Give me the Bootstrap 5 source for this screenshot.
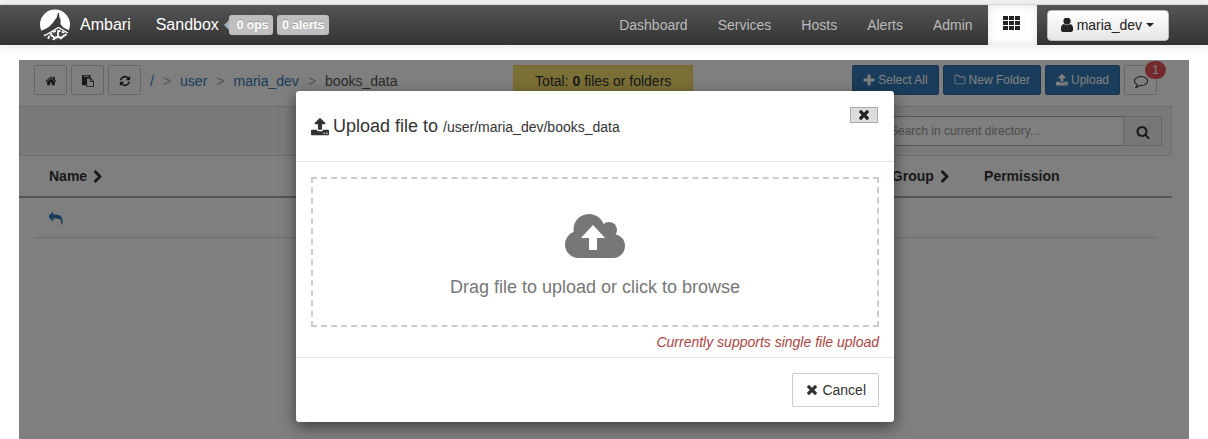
<!DOCTYPE html>
<html lang="en">
<head>
<meta charset="utf-8">
<meta name="viewport" content="width=device-width, initial-scale=1">
<title>Ambari - Files View</title>
<link href="https://cdn.jsdelivr.net/npm/bootstrap@5.3.0/dist/css/bootstrap.min.css" rel="stylesheet">
<style>
  body { font-family: "Liberation Sans", Arial, sans-serif; font-size: 14px; line-height: 20px; color: #333; background: #fff; }
  .ico { width: 1em; height: 1em; fill: currentColor; flex: none; }
  .page-top { background: #f4f4f4; display: flow-root; }
  .topbar { border-top: 1px solid #d8d8d8; margin-top: 4px; height: 41px; padding: 0 39px; background: linear-gradient(#555, #333); box-shadow: 0 1px 10px rgba(0,0,0,.1); }
  .topbar .brand { color: #fff; font-size: 16px; gap: 9px; }
  .topbar .cluster { margin-left: 25px; }
  .topbar .nav-link { color: #bbb; font-size: 14px; padding: 0 15px; line-height: 40px; }
  .topbar .grid-link { background: #fff; color: #222; width: 49px; padding: 0; box-shadow: inset 0 0 8px rgba(0,0,0,.12); font-size: 20px; }
  .tagbox { background: #bfbfbf; color: #fff; font-size: 12px; font-weight: bold; line-height: 20px; border-radius: 3px; padding: 0 5px; text-shadow: 0 -1px 0 rgba(0,0,0,.25); }
  .ops { position: relative; padding-left: 8px; margin-left: 10px; }
  .ops::before { content: ""; position: absolute; left: -5px; top: 5px; border: 5px solid transparent; border-left: 0; border-right-color: #9fb2bd; }
  .user-btn { background: linear-gradient(#fff, #e6e6e6); border: 1px solid #bbb; color: #222; height: 31px; font-size: 14px; padding: 0 14px 0 12px; border-radius: 4px; gap: 3px; margin: 0 0 0 10px; }
  .user-btn::after { margin-left: 1px; }
  .workspace { margin: 15px 19px 0; min-height: calc(100vh - 60px); padding-right: 17px; position: relative; }
  .tools { display: grid; grid-template-columns: 31fr 180px 30fr; padding: 5px 15px 9px; }
  .tool-btn { height: 30px; font-size: 12px; line-height: 18px; border-radius: 2px; gap: 3px; }
  .tool-plain { background: #fff; border: 1px solid #ccc; color: #333; padding: 0; width: 33px; }
  .tool-plain .wide { font-size: 14px; }
  .tool-main { background: #337ab7; border: 1px solid #2e6da4; color: #fff; padding: 0 10px; }
  .crumbs { --bs-breadcrumb-divider: ">"; --bs-breadcrumb-divider-color: #aaa; --bs-breadcrumb-item-padding-x: 9px; font-size: 14px; line-height: 32px; margin: 0 0 0 9px; }
  .crumbs a { color: #337ab7; text-decoration: none; }
  .crumbs .active { color: #555; }
  .total { background: #f4de6c; border: 1px solid #f0d458; height: 31px; line-height: 30px; font-size: 14px; }
  .count { position: absolute; right: -10px; top: -5px; background: #e8545a; color: #fff; font-size: 12px; line-height: 18px; width: 21px; border-radius: 9px; }
  .searchbar { background: #f5f5f5; border: 1px solid #ddd; height: 50px; padding: 9px; }
  .searchbar .input-group { width: 284px; }
  .searchbar .form-control, .searchbar .btn { height: 30px; font-size: 12px; border-radius: 2px; border-color: #aaa; padding: 0 11px; }
  .searchbar .btn { background: #eee; color: #333; width: 39px; font-size: 14px; border-color: #ccc; }
  .searchbar .form-control::placeholder { color: #999; }
  .files { font-size: 14px; table-layout: fixed; }
  .files th { border-bottom: 2px solid #aaa; padding: 9px 0 10px; height: 41px; }
  .files .col-name { width: 75.7%; }
  .files .col-group { width: 8%; }
  .files td { border: 0; padding: 10px 0; height: 41px; }
  .files td a { color: #337ab7; }
  .files tr > :first-child { padding-left: 30px; }
  .files tbody tr { background: linear-gradient(#ddd, #ddd) 50% 100% / calc(100% - 30px) 1px no-repeat; }
  .veil { position: absolute; inset: 0; background: rgba(0,0,0,.5); padding: 31px 18px 17px 0; z-index: 5; }
  .upload-box { width: 598px; border: 0; border-radius: 3px; background: #fff; color: #333; box-shadow: 0 5px 15px rgba(0,0,0,.5); }
  .upload-box .modal-header { padding: 15px; height: 71px; border-bottom: 1px solid #e5e5e5; }
  .upload-box h4 { font-size: 18px; line-height: 40px; gap: 4px; }
  .upload-box h4 small { font-size: 14px; }
  .close-x { border: 1px solid #aaa; background: #ddd; color: #222; width: 28px; height: 16px; font-size: 14px; margin: 1px 1px 0 0; }
  .upload-box .modal-body { padding: 15px 15px 5px; }
  .drop { border: 2px dashed #ccc; height: 150px; font-size: 18px; color: #777; background: #fff; gap: 19px; width: 100%; padding-top: 7px; }
  .hint { color: #a94442; line-height: 20px; margin-top: 5px; }
  .upload-box .modal-footer { padding: 15px; border-top: 1px solid #e5e5e5; }
  .upload-box .modal-footer > * { margin: 0; }
  .cancel { border: 1px solid #ccc; background: #fff; color: #333; font-size: 14px; line-height: 20px; padding: 6px 12px; border-radius: 2px; gap: 3px; }
</style>
</head>
<body>
<svg class="d-none" aria-hidden="true">
  <symbol id="home" viewBox="0 0 1792 1792"><path d="M1472 992v480q0 26-19 45t-45 19h-384v-384h-256v384h-384q-26 0-45-19t-19-45v-480q0-1 .5-3t.5-3l575-474 575 474q1 2 1 6zm223-69l-62 74q-8 9-21 11h-3q-13 0-21-7l-692-577-692 577q-12 8-24 7-13-2-21-11l-62-74q-8-10-7-23.5t11-21.5l719-599q32-26 76-26t76 26l244 204v-195q0-14 9-23t23-9h192q14 0 23 9t9 23v408l219 182q10 8 11 21.5t-7 23.5z"/></symbol>
  <symbol id="paste" viewBox="0 0 1792 1792"><path d="M768 1664h896v-640h-416q-40 0-68-28t-28-68v-416h-384v1152zm256-1440v-64q0-13-9.5-22.5t-22.5-9.5h-704q-13 0-22.5 9.5t-9.5 22.5v64q0 13 9.5 22.5t22.5 9.5h704q13 0 22.5-9.5t9.5-22.5zm256 672h299l-299-299v299zm512 128v672q0 40-28 68t-68 28h-960q-40 0-68-28t-28-68v-160h-544q-40 0-68-28t-28-68v-1344q0-40 28-68t68-28h1088q40 0 68 28t28 68v328q21 13 36 28l408 408q28 28 48 76t20 88z"/></symbol>
  <symbol id="refresh" viewBox="0 0 1792 1792"><path d="M1639 1056q0 5-1 7-64 268-268 434.5t-478 166.5q-146 0-282.5-55t-243.5-157l-129 129q-19 19-45 19t-45-19-19-45v-448q0-26 19-45t45-19h448q26 0 45 19t19 45-19 45l-137 137q71 66 161 102t187 36q134 0 250-65t186-179q11-17 53-117 8-23 30-23h192q13 0 22.5 9.5t9.5 22.5zm25-800v448q0 26-19 45t-45 19h-448q-26 0-45-19t-19-45 19-45l138-138q-148-137-349-137-134 0-250 65t-186 179q-11 17-53 117-8 23-30 23h-199q-13 0-22.5-9.5t-9.5-22.5v-7q65-268 270-434.5t480-166.5q146 0 284 55.5t245 156.5l130-129q19-19 45-19t45 19 19 45z"/></symbol>
  <symbol id="chev" viewBox="256 0 1280 1792"><path d="M1363 877l-742 742q-19 19-45 19t-45-19l-166-166q-19-19-19-45t19-45l531-531-531-531q-19-19-19-45t19-45l166-166q19-19 45-19t45 19l742 742q19 19 19 45t-19 45z"/></symbol>
  <symbol id="reply" viewBox="0 0 1792 1792"><path d="M1792 1120q0 166-127 451-3 7-10.5 24t-13.5 30-13 22q-12 17-28 17-15 0-23.5-10t-8.5-25q0-9 2.5-26.5t2.5-23.5q5-68 5-123 0-112-19.5-200.5t-54-153.5-89.5-112-117.5-79-151.5-47-177.5-22-208.500-7h-224v256q0 26-19 45t-45 19-45-19l-512-512q-19-19-19-45t19-45l512-512q19-19 45-19t45 19 19 45v256h224q713 0 875 403 53 134 53 333z"/></symbol>
  <symbol id="plus" viewBox="128 64 1536 1536"><path d="M1600 736v192q0 40-28 68t-68 28h-416v416q0 40-28 68t-68 28h-192q-40 0-68-28t-28-68v-416h-416q-40 0-68-28t-28-68v-192q0-40 28-68t68-28h416v-416q0-40 28-68t68-28h192q40 0 68 28t28 68v416h416q40 0 68 28t28 68z"/></symbol>
  <symbol id="folder" viewBox="0 0 1792 1792"><path d="M1600 1312v-704q0-40-28-68t-68-28h-704q-40 0-68-28t-28-68v-64q0-40-28-68t-68-28h-320q-40 0-68 28t-28 68v960q0 40 28 68t68 28h1216q40 0 68-28t28-68zm128-704v704q0 92-66 158t-158 66h-1216q-92 0-158-66t-66-158v-960q0-92 66-158t158-66h320q92 0 158 66t66 158v32h672q92 0 158 66t66 158z"/></symbol>
  <symbol id="upload" viewBox="64 64 1664 1664"><path d="M1344 1472q0-26-19-45t-45-19-45 19-19 45 19 45 45 19 45-19 19-45zm256 0q0-26-19-45t-45-19-45 19-19 45 19 45 45 19 45-19 19-45zm128-224v320q0 40-28 68t-68 28h-1472q-40 0-68-28t-28-68v-320q0-40 28-68t68-28h427q21 56 70.5 92t110.5 36h256q61 0 110.5-36t70.5-92h427q40 0 68 28t28 68zm-325-648q-17 40-59 40h-256v448q0 26-19 45t-45 19h-256q-26 0-45-19t-19-45v-448h-256q-42 0-59-40-17-39 14-69l448-448q18-19 45-19t45 19l448 448q31 30 14 69z"/></symbol>
  <symbol id="comment" viewBox="0 0 1792 1792"><path d="M896 384q-204 0-381.5 69.5t-282 187.5-104.5 255q0 112 71.5 213.5t201.5 175.5l87 50-27 96q-24 91-70 172 152-63 275-171l43-38 57 6q69 8 130 8 204 0 381.5-69.5t282-187.5 104.5-255-104.5-255-282-187.5-381.5-69.5zm896 512q0 174-120 321.5t-326 233-450 85.5q-70 0-145-8-198 175-460 242-49 14-114 22h-5q-15 0-27-10.5t-16-27.5v-1q-3-4-.5-12t2-10 4.5-9.5l6-9 7-8.500 8-9q7-8 31-34.5t34.5-38 31-39.5 32.5-51 27-59 26-76q-157-89-247.5-220t-90.5-281q0-174 120-321.5t326-233 450-85.5 450 85.5 326 233 120 321.5z"/></symbol>
  <symbol id="search" viewBox="0 0 1792 1792"><path d="M1216 832q0-185-131.5-316.5t-316.5-131.5-316.5 131.5-131.5 316.5 131.5 316.5 316.5 131.5 316.5-131.5 131.5-316.5zm512 832q0 52-38 90t-90 38q-54 0-90-38l-343-342q-179 124-399 124-143 0-273.5-55.5t-225-150-150-225-55.5-273.5 55.5-273.5 150-225 225-150 273.5-55.5 273.5 55.5 225 150 150 225 55.5 273.5q0 220-124 399l343 343q37 37 37 90z"/></symbol>
  <symbol id="times" viewBox="192 128 1408 1664"><path d="M1490 1322q0 40-28 68l-136 136q-28 28-68 28t-68-28l-294-294-294 294q-28 28-68 28t-68-28l-136-136q-28-28-28-68t28-68l294-294-294-294q-28-28-28-68t28-68l136-136q28-28 68-28t68 28l294 294 294-294q28-28 68-28t68 28l136 136q28 28 28 68t-28 68l-294 294 294 294q28 28 28 68z"/></symbol>
  <symbol id="user" viewBox="192 192 1408 1472"><path d="M1536 1399q0 109-62.5 187t-150.5 78h-854q-88 0-150.5-78t-62.5-187q0-85 8.5-160.5t31.5-152 58.5-131 94-89 134.5-34.5q131 128 313 128t313-128q76 0 134.5 34.5t94 89 58.5 131 31.5 152 8.5 160.500zm-256-887q0 159-112.5 271.5t-271.5 112.5-271.5-112.5-112.5-271.5 112.5-271.5 271.5-112.5 271.5 112.5 112.5 271.5z"/></symbol>
  <symbol id="apps" viewBox="0 0 20 20"><path d="M1 1h5v4h-5zM7 1h5v4h-5zM13 1h5v4h-5zM1 6h5v4h-5zM7 6h5v4h-5zM13 6h5v4h-5zM1 11h5v4h-5zM7 11h5v4h-5zM13 11h5v4h-5z"/></symbol>
</svg>

<header class="page-top">
  <nav class="topbar d-flex align-items-center" aria-label="Main">
    <a class="brand d-flex align-items-center text-decoration-none" href="#">
      <svg width="32" height="32" viewBox="0 0 32 32" aria-hidden="true">
        <clipPath id="disc"><circle cx="16" cy="16" r="15.500"/></clipPath>
        <circle cx="16" cy="15.500" r="15" fill="#fff"/>
        <g clip-path="url(#disc)">
          <path d="M19 4h1l.5 5 1 1v5q2 4 7 5.500l3 1.500-1 3-11-7-12 8-4-1-2-3q10-3 15-12l1-1z" fill="#3c3c3c"/>
          <path d="M5 27l14.500-9L31 25v7H5z" fill="#484848"/>
          <g fill="none" stroke="#fff">
            <path d="M5 27l14.500-8.500L29 24" stroke-width="1.300"/>
            <path d="M9 30q3-8 10-8t9 6" stroke-width="1.800" stroke-dasharray="3 1.300"/>
            <path d="M19 23v4M12 26l4 3M26 26l-4 3M14 31q2-3 5-3t4 3" stroke-width="1.800"/>
          </g>
        </g>
      </svg>
      Ambari
    </a>
    <div class="cluster d-flex align-items-center">
      <a class="brand text-decoration-none" href="#">Sandbox</a>
      <a class="tagbox ops text-decoration-none" href="#">0 ops</a>
      <a class="tagbox ms-1 text-decoration-none" href="#">0 alerts</a>
    </div>
    <div class="nav ms-auto flex-nowrap">
      <a class="nav-link" href="#">Dashboard</a>
      <a class="nav-link" href="#">Services</a>
      <a class="nav-link" href="#">Hosts</a>
      <a class="nav-link" href="#">Alerts</a>
      <a class="nav-link" href="#">Admin</a>
      <a class="nav-link grid-link d-flex align-items-center justify-content-center" href="#" aria-label="Views"><svg class="ico"><use href="#apps"/></svg></a>
    </div>
    <button class="user-btn btn dropdown-toggle d-flex align-items-center" type="button"><svg class="ico"><use href="#user"/></svg>maria_dev</button>
  </nav>
</header>

<main class="workspace">
  <div class="tools">
    <div class="d-flex align-items-start">
      <div class="d-flex gap-1">
        <button class="btn tool-btn tool-plain" type="button" aria-label="Home"><svg class="ico"><use href="#home"/></svg></button>
        <button class="btn tool-btn tool-plain" type="button" aria-label="Paste"><svg class="ico"><use href="#paste"/></svg></button>
        <button class="btn tool-btn tool-plain" type="button" aria-label="Refresh"><svg class="ico"><use href="#refresh"/></svg></button>
      </div>
      <ol class="breadcrumb crumbs flex-nowrap">
        <li class="breadcrumb-item"><a href="#">/</a></li>
        <li class="breadcrumb-item"><a href="#">user</a></li>
        <li class="breadcrumb-item"><a href="#">maria_dev</a></li>
        <li class="breadcrumb-item active">books_data</li>
      </ol>
    </div>
    <div class="total text-center">Total: <b>0</b> files or folders</div>
    <div class="d-flex gap-1 justify-content-end">
      <button class="btn tool-btn tool-main d-flex align-items-center" type="button"><svg class="ico"><use href="#plus"/></svg>Select All</button>
      <button class="btn tool-btn tool-main d-flex align-items-center" type="button"><svg class="ico"><use href="#folder"/></svg>New Folder</button>
      <button class="btn tool-btn tool-main d-flex align-items-center" type="button"><svg class="ico"><use href="#upload"/></svg>Upload</button>
      <button class="btn tool-btn tool-plain position-relative" type="button" aria-label="Messages"><svg class="ico wide"><use href="#comment"/></svg><span class="count">1</span></button>
    </div>
  </div>
  <div class="searchbar d-flex justify-content-end">
    <div class="input-group flex-nowrap">
      <input class="form-control" type="text" placeholder="Search in current directory..." aria-label="Search in current directory">
      <button class="btn" type="button" aria-label="Search"><svg class="ico"><use href="#search"/></svg></button>
    </div>
  </div>
  <table class="files w-100">
    <thead>
      <tr><th class="col-name" scope="col">Name <svg class="ico"><use href="#chev"/></svg></th><th class="col-group" scope="col">Group <svg class="ico"><use href="#chev"/></svg></th><th scope="col">Permission</th></tr>
    </thead>
    <tbody>
      <tr><td colspan="3"><a href="#" aria-label="Parent folder"><svg class="ico"><use href="#reply"/></svg></a></td></tr>
    </tbody>
  </table>

  <div class="veil d-flex justify-content-center align-items-start">
    <div class="modal-content upload-box" role="dialog" aria-labelledby="dlg-title">
      <div class="modal-header align-items-start">
        <h4 class="d-flex align-items-center m-0 fw-normal" id="dlg-title"><svg class="ico"><use href="#upload"/></svg><span>Upload file to <small>/user/maria_dev/books_data</small></span></h4>
        <button class="close-x d-flex align-items-center justify-content-center p-0" type="button" aria-label="Close"><svg class="ico"><use href="#times"/></svg></button>
      </div>
      <div class="modal-body">
        <button class="drop d-flex flex-column align-items-center justify-content-center" type="button">
          <svg width="60" height="44" viewBox="0 0 60 44" fill="#777" aria-hidden="true">
            <circle cx="13.500" cy="30.500" r="13.500"/><circle cx="24" cy="15.500" r="15.500"/><circle cx="44" cy="16" r="8"/><circle cx="48" cy="32" r="12"/><path d="M13 20h35v24H13z"/>
            <path d="M28 11l12 13h-8v12h-8V24h-8z" fill="#fff"/>
          </svg>
          <span>Drag file to upload or click to browse</span>
        </button>
        <p class="hint fst-italic text-end mb-0">Currently supports single file upload</p>
      </div>
      <div class="modal-footer">
        <button class="cancel btn d-flex align-items-center" type="button"><svg class="ico"><use href="#times"/></svg>Cancel</button>
      </div>
    </div>
  </div>
</main>
<script src="https://cdn.jsdelivr.net/npm/bootstrap@5.3.0/dist/js/bootstrap.bundle.min.js"></script>
</body>
</html>
